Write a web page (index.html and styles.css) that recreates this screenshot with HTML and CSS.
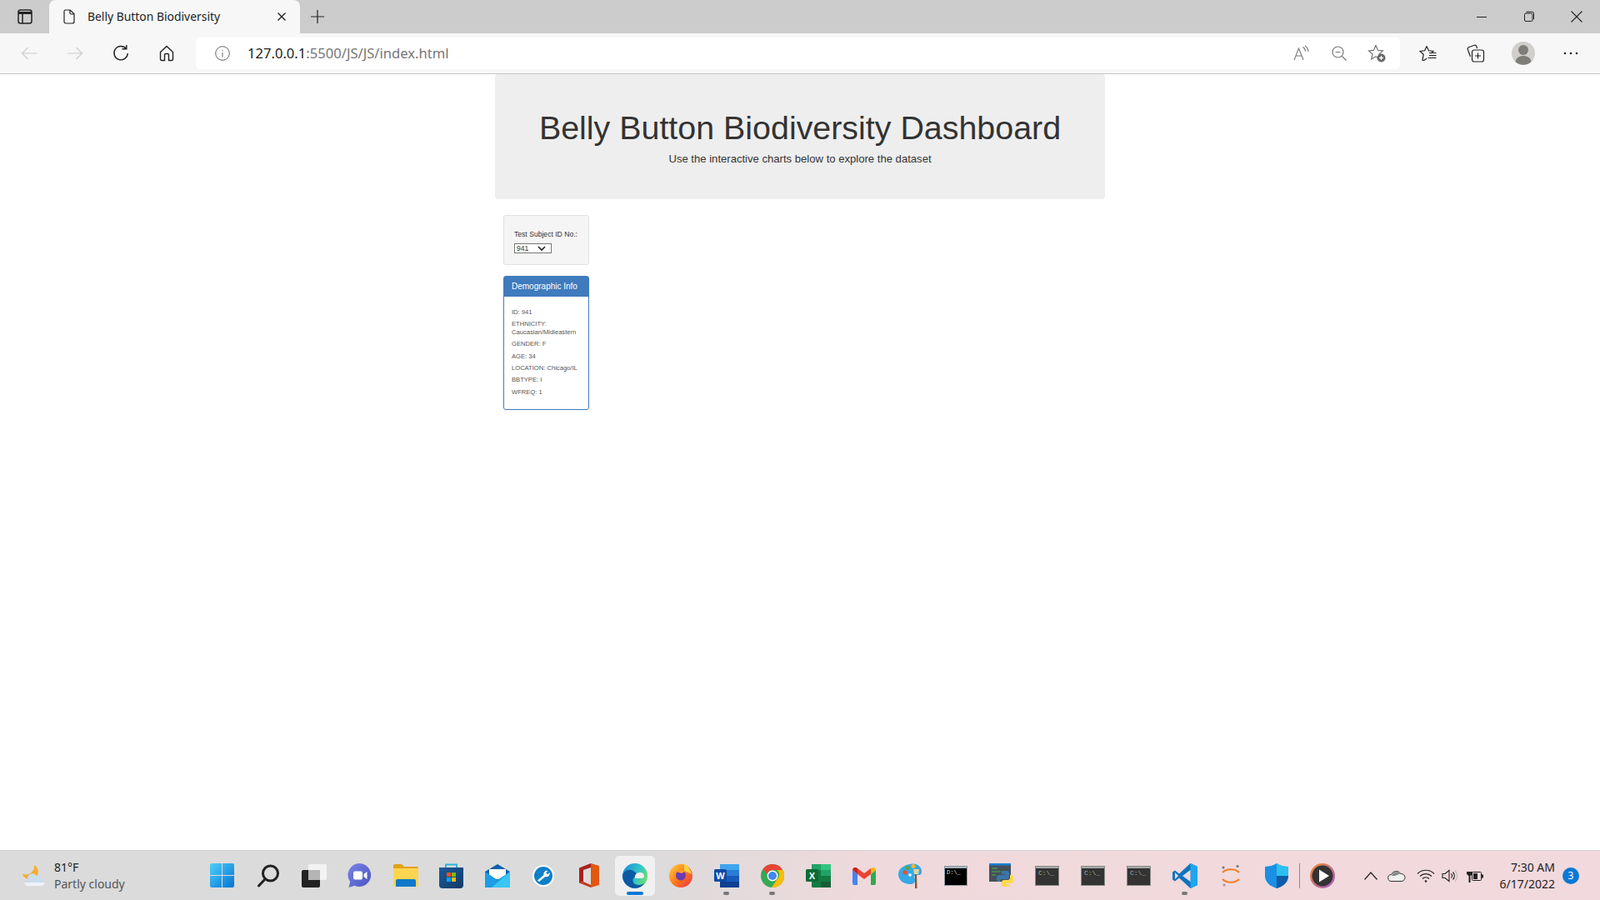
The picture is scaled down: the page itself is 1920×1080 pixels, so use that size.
FILE: index.html
```html
<!DOCTYPE html>
<html lang="en">
<head>
    <meta charset="UTF-8">
    <meta name="viewport" content="width=device-width, initial-scale=1.0">
    <title>Belly Button Biodiversity</title>
    <link rel="stylesheet" href="styles.css">
</head>
<body>
    <!-- browser tabs -->
    <div class="tabstrip">
        <div class="strip-btn">
            <svg width="18" height="18" viewBox="0 0 18 18" fill="none" stroke="#222" stroke-width="1.5"><rect x="1" y="1" width="16" height="16" rx="2.5"/><path d="M1 4.500h16" stroke-width="3"/><path d="M6 5v12"/></svg>
        </div>
        <div class="tab">
            <svg class="tab-icon" width="14" height="18" viewBox="0 0 14 18" fill="none" stroke="#222" stroke-width="1.2"><path d="M2.500 1h5.700L13 5.800V15a2 2 0 0 1-2 2H3a2 2 0 0 1-2-2V2.500A1.500 1.500 0 0 1 2.500 1zM8 1v3.500A1.500 1.500 0 0 0 9.500 6H13"/></svg>
            <span class="tab-title">Belly Button Biodiversity</span>
            <svg class="tab-close" width="12" height="12" viewBox="0 0 12 12" stroke="#222" stroke-width="1.4"><path d="M1.500 1.500l9 9M10.500 1.500l-9 9"/></svg>
        </div>
        <div class="new-tab">
            <svg width="16" height="16" viewBox="0 0 16 16" stroke="#222" stroke-width="1.2"><path d="M8 0v16M0 8h16"/></svg>
        </div>
        <div class="win-controls">
            <div class="win-btn"><svg width="14" height="14" viewBox="0 0 14 14" stroke="#222"><path d="M1 7.500h12"/></svg></div>
            <div class="win-btn"><svg width="14" height="14" viewBox="0 0 14 14" fill="none" stroke="#222"><rect x="1.500" y="3" width="9.500" height="9.500" rx="1.500"/><path d="M3.500 1.200h7a2 2 0 0 1 2 2v7"/></svg></div>
            <div class="win-btn"><svg width="14" height="14" viewBox="0 0 14 14" stroke="#222" stroke-width="1.100"><path d="M.5.500l13 13M13.500.500l-13 13"/></svg></div>
        </div>
    </div>

    <!-- address bar -->
    <div class="toolbar">
        <div class="nav-btn"><svg width="20" height="18" viewBox="0 0 20 18" fill="none" stroke="#ccc" stroke-width="1.200"><path d="M19 9H1.500M8.500 2L1.500 9l7 7"/></svg></div>
        <div class="nav-btn"><svg width="20" height="18" viewBox="0 0 20 18" fill="none" stroke="#ccc" stroke-width="1.200"><path d="M1 9h17.500M11.500 2l7 7-7 7"/></svg></div>
        <div class="nav-btn"><svg width="20" height="20" viewBox="0 0 20 20" fill="none" stroke="#222" stroke-width="1.400"><path d="M16.500 4.500A8.200 8.200 0 1 0 18.300 10"/><path d="M11.500 4.800h5.300V0"/></svg></div>
        <div class="nav-btn"><svg width="18" height="20" viewBox="0 0 18 20" fill="none" stroke="#222" stroke-width="1.400"><path d="M1.500 8.500L9 1.500l7.500 7V17a1.500 1.500 0 0 1-1.500 1.500h-3.500V12a1.500 1.500 0 0 0-1.500-1.500H8A1.500 1.500 0 0 0 6.500 12v6.500H3A1.500 1.500 0 0 1 1.500 17z"/></svg></div>
        <div class="urlbar">
            <svg class="url-info" width="18" height="18" viewBox="0 0 18 18" fill="none" stroke="#666"><circle cx="9" cy="9" r="8.300"/><path d="M9 8v5.500M9 5v1.300"/></svg>
            <span class="url-text"><span class="url-host">127.0.0.1</span>:5500/JS/JS/index.html</span>
            <div class="url-actions">
                <div class="url-btn"><svg width="20" height="20" viewBox="0 0 20 20" fill="none" stroke="#777" stroke-width="1.100"><path d="M1 18L6.500 4 12 18M3 13h7"/><path d="M11.500 2.500a6 6 0 0 1 3 5M14 1a9 9 0 0 1 4 7"/></svg></div>
                <div class="url-btn"><svg width="18" height="18" viewBox="0 0 18 18" fill="none" stroke="#777" stroke-width="1.200"><circle cx="7.500" cy="7.500" r="6.500"/><path d="M12.500 12.500l5 5M4.500 7.500h6"/></svg></div>
                <div class="url-btn"><svg width="22" height="22" viewBox="0 0 22 22" fill="none" stroke="#666" stroke-width="1.100"><path d="M10 1.500l2.500 5.800 6 .6-4.600 4 1.400 6-5.300-3.100-5.300 3.100 1.400-6-4.600-4 6-.6z"/><circle cx="16.500" cy="16.500" r="5" fill="#666" stroke="none"/><path d="M16.500 14v5M14 16.500h5" stroke="#fff" stroke-width="1.300"/></svg></div>
            </div>
        </div>
        <div class="tool-btn"><svg width="22" height="20" viewBox="0 0 22 20" fill="none" stroke="#222" stroke-width="1.200"><path d="M9 1.500l2.400 5.300 5.600.6-3 2.700M5.700 18.500l3.300-2.200M9 1.500L6.600 6.800 1 7.400l4.200 3.800-1.200 7 1.700.3"/><path d="M12 9.500h8.500M12 12.500h8.500M10.500 15.500h10"/></svg></div>
        <div class="tool-btn"><svg width="22" height="22" viewBox="0 0 22 22" fill="none" stroke="#222" stroke-width="1.200"><path d="M4.500 15L1.300 6.200a2 2 0 0 1 1.200-2.500l6.800-2.400a2 2 0 0 1 2.500 1.200L12.500 5"/><rect x="6.500" y="7" width="14" height="14" rx="2.500"/><path d="M13.500 10.500v7M10 14h7"/></svg></div>
        <div class="tool-btn"><svg width="28" height="28" viewBox="0 0 28 28"><circle cx="14" cy="14" r="14" fill="#d0cfcc"/><circle cx="14" cy="10" r="6" fill="#7f7d7a"/><path d="M4.500 24c1-5 5-7 9.500-7s8.500 2 9.500 7a14 14 0 0 1-19 0z" fill="#7f7d7a"/></svg></div>
        <div class="tool-btn"><svg width="18" height="4" viewBox="0 0 18 4" fill="#222"><circle cx="2" cy="2" r="1.300"/><circle cx="9" cy="2" r="1.300"/><circle cx="16" cy="2" r="1.300"/></svg></div>
    </div>

    <!-- page content -->
    <main class="page">
        <div class="container">
            <div class="jumbotron">
                <h1>Belly Button Biodiversity Dashboard</h1>
                <p>Use the interactive charts below to explore the dataset</p>
            </div>
            <div class="sidebar">
                <div class="well">
                    <label class="well-label" for="selDataset">Test Subject ID No.:</label>
                    <select class="sel-dataset" id="selDataset"><option>941</option></select>
                </div>
                <div class="panel">
                    <div class="panel-heading">Demographic Info</div>
                    <div class="panel-body">
                        <div class="meta-row">ID: 941</div>
                        <div class="meta-row">ETHNICITY: Caucasian/Midleastern</div>
                        <div class="meta-row">GENDER: F</div>
                        <div class="meta-row">AGE: 34</div>
                        <div class="meta-row">LOCATION: Chicago/IL</div>
                        <div class="meta-row">BBTYPE: I</div>
                        <div class="meta-row">WFREQ: 1</div>
                    </div>
                </div>
            </div>
        </div>
    </main>

    <!-- windows taskbar -->
    <footer class="taskbar">
        <div class="weather">
            <svg width="28" height="26" viewBox="0 0 28 26"><path d="M15 0A9.500 9.500 0 1 1 1 10.500 10 10 0 0 0 15 0z" fill="#f4ae2e"/><path d="M8 25a4.500 4.500 0 0 1-1-8.800A6 6 0 0 1 18 13a5 5 0 0 1 5 3 4.500 4.500 0 0 1 0 9z" fill="#c9dded"/><path d="M6 25h18a4 4 0 0 0 3.500-4H3.500A4.500 4.500 0 0 0 6 25z" fill="#edf3f8"/></svg>
            <div class="weather-text">
                <div class="weather-temp">81°F</div>
                <div class="weather-desc">Partly cloudy</div>
            </div>
        </div>
        <div class="tb-icons">
            <div class="tb-item"><svg width="29" height="29" viewBox="0 0 29 29"><defs><linearGradient id="win" x1="0" y1="0" x2="1" y2="1"><stop offset="0" stop-color="#4fd0fa"/><stop offset="1" stop-color="#0473d4"/></linearGradient></defs><path d="M2 0h12v14H0V2a2 2 0 0 1 2-2zM15 0h12a2 2 0 0 1 2 2v12H15zM0 15h14v14H2a2 2 0 0 1-2-2zM15 15h14v12a2 2 0 0 1-2 2H15z" fill="url(#win)"/></svg></div>
            <div class="tb-item"><svg width="28" height="28" viewBox="0 0 28 28" fill="none" stroke="#222" stroke-width="3" stroke-linecap="round"><circle cx="16.500" cy="11" r="9"/><path d="M10 18l-7.500 8"/></svg></div>
            <div class="tb-item"><svg width="30" height="28" viewBox="0 0 30 28"><rect x="8" y="0" width="22" height="19" rx="2" fill="#f3f3f3"/><rect x="0" y="7" width="22" height="21" rx="2" fill="#222"/><rect x="8" y="7" width="14" height="12" fill="#b5b5b5"/></svg></div>
            <div class="tb-item"><svg width="29" height="29" viewBox="0 0 29 29"><defs><linearGradient id="teams" x1="0" y1="0" x2="1" y2="1"><stop offset="0" stop-color="#7b83eb"/><stop offset="1" stop-color="#4b53bc"/></linearGradient></defs><path d="M14.500 0a14 14 0 1 1-6 26.800L1.500 29l1.600-7A14 14 0 0 1 14.500 0z" fill="url(#teams)"/><rect x="7" y="9.500" width="11" height="10" rx="2" fill="#fff"/><path d="M19.500 13l4-3v9l-4-3z" fill="#fff"/></svg></div>
            <div class="tb-item"><svg width="30" height="27" viewBox="0 0 30 27"><path d="M0 2a2 2 0 0 1 2-2h8l3 3h15a2 2 0 0 1 2 2v3H0z" fill="#e0a21a"/><path d="M0 5h30v20a2 2 0 0 1-2 2H2a2 2 0 0 1-2-2z" fill="#fdd54f"/><path d="M3 27v-7a2 2 0 0 1 2-2h20a2 2 0 0 1 2 2v7z" fill="#0f78c9"/></svg></div>
            <div class="tb-item"><svg width="29" height="30" viewBox="0 0 29 30"><defs><linearGradient id="store" x1="0" y1="0" x2="1" y2="1"><stop offset="0" stop-color="#1a5b9c"/><stop offset="1" stop-color="#123a66"/></linearGradient></defs><path d="M8 6V1.500h13V6" fill="none" stroke="#2cb5dc" stroke-width="2"/><path d="M0 5h29v21a4 4 0 0 1-4 4H4a4 4 0 0 1-4-4z" fill="url(#store)"/><rect x="9" y="11" width="5" height="5" fill="#f25022"/><rect x="15" y="11" width="5" height="5" fill="#7fba00"/><rect x="9" y="17" width="5" height="5" fill="#00a4ef"/><rect x="15" y="17" width="5" height="5" fill="#ffb900"/></svg></div>
            <div class="tb-item"><svg width="30" height="28" viewBox="0 0 30 28"><path d="M15 0l15 9v19H0V9z" fill="#0f62ad"/><path d="M5 6h20v12H5z" fill="#fff"/><path d="M0 9l15 10L30 9v19H0z" fill="#1d9de6"/><path d="M30 9v19H8z" fill="#39c6f4"/></svg></div>
            <div class="tb-item"><svg width="26" height="26" viewBox="0 0 26 26"><circle cx="13" cy="13" r="13" fill="#fff"/><circle cx="13" cy="13" r="11" fill="#0f7fc9"/><path d="M6 18.500l7.500-6.500a4 4 0 0 1 5-5l-2.300 2.500 2 1.800 2.300-2.300a4 4 0 0 1-5.200 5L8 20z" fill="#fff"/></svg></div>
            <div class="tb-item"><svg width="24" height="29" viewBox="0 0 24 29"><path d="M14 0L0 5.500v18L5 22V8l9-3z" fill="#a5231f"/><path d="M0 23.500L14 29v-3L5 22z" fill="#c23a1c"/><path d="M14 0l10 3v23l-10 3z" fill="#e3570f"/></svg></div>
            <div class="tb-item tb-active"><svg width="30" height="30" viewBox="0 0 30 30"><defs><linearGradient id="edge1" x1="0" y1=".2" x2="1" y2=".6"><stop offset="0" stop-color="#1b8fd8"/><stop offset=".6" stop-color="#33c4c8"/><stop offset="1" stop-color="#6be06a"/></linearGradient></defs><circle cx="15" cy="15" r="15" fill="url(#edge1)"/><path d="M0 15c1-6 8-9 13-6 4 2 5 6 4 8h-2c-3 0-4 5 0 8 4 2 9 1 12-2a15 15 0 0 1-12 7C7 30 0 23 0 15z" fill="#0c59a4"/><path d="M15 18c-1-4 2-7 6-7 3 0 5 2 5 4.500 0 1.500-1 2.500-3 2.500z" fill="#f0f0f0"/></svg></div>
            <div class="tb-item"><svg width="28" height="29" viewBox="0 0 28 29"><defs><linearGradient id="fox" x1="0" y1="0" x2="1" y2="1"><stop offset="0" stop-color="#ffd23f"/><stop offset=".5" stop-color="#ff7a1a"/><stop offset="1" stop-color="#e8304a"/></linearGradient></defs><circle cx="14" cy="15" r="14" fill="url(#fox)"/><path d="M18 0c5 4 8 8 9 13l-9-4z" fill="#ffd23f"/><circle cx="14" cy="14.500" r="6" fill="#6a3bb5"/><path d="M8 10c3-3 8-3 11 0l-4 2z" fill="#ff9a2e"/></svg></div>
            <div class="tb-item tb-running"><svg width="30" height="28" viewBox="0 0 30 28"><rect x="7" y="0" width="23" height="28" rx="1.500" fill="#185abd"/><rect x="7" y="0" width="23" height="7" fill="#41a5ee"/><rect x="7" y="7" width="23" height="7" fill="#2b7cd3"/><rect x="7" y="21" width="23" height="7" fill="#103f91"/><rect x="0" y="6" width="15" height="15" rx="1.500" fill="#0f4ba5"/><text x="7.500" y="18" class="word-w">W</text></svg></div>
            <div class="tb-item tb-running"><svg width="28" height="28" viewBox="0 0 28 28"><circle cx="14" cy="14" r="14" fill="#34a853"/><path d="M14 0a14 14 0 0 1 12.100 7H14a7 7 0 0 0-6.500 4.500L2.500 6A14 14 0 0 1 14 0z" fill="#ea4335"/><path d="M26.100 7A14 14 0 0 1 13 28l6.500-10a7 7 0 0 0 0-11z" fill="#fbbc05"/><circle cx="14" cy="14" r="6.500" fill="#fff"/><circle cx="14" cy="14" r="5" fill="#4285f4"/></svg></div>
            <div class="tb-item"><svg width="30" height="28" viewBox="0 0 30 28"><rect x="7" y="0" width="23" height="28" rx="1.500" fill="#107c41"/><rect x="18" y="0" width="12" height="7" fill="#33c481"/><rect x="7" y="0" width="11" height="7" fill="#21a366"/><rect x="18" y="7" width="12" height="7" fill="#21a366"/><rect x="18" y="21" width="12" height="7" fill="#185c37"/><rect x="0" y="6" width="15" height="15" rx="1.500" fill="#0e6a37"/><text x="7.500" y="18" class="word-w">X</text></svg></div>
            <div class="tb-item"><svg width="28" height="22" viewBox="0 0 28 22"><path d="M0 4v16a2 2 0 0 0 2 2h4V9z" fill="#4285f4"/><path d="M22 9v13h4a2 2 0 0 0 2-2V4z" fill="#34a853"/><path d="M6 9l8 6 8-6V2l-8 6-8-6z" fill="#ea4335"/><path d="M0 4a3.500 3.500 0 0 1 6-2v7z" fill="#c5221f"/><path d="M22 2a3.500 3.500 0 0 1 6 2l-6 5z" fill="#fbbc04"/></svg></div>
            <div class="tb-item"><svg width="28" height="30" viewBox="0 0 28 30"><path d="M14 1c8-2 14 3 14 9 0 5-4 4-6 4-3 0-3 3-2 5 1 3-1 6-6 6C6 25 0 20 0 13 0 7 6 2 14 1z" fill="#35a8e8"/><circle cx="8" cy="11" r="2.700" fill="#e0533c"/><circle cx="11" cy="5.500" r="2.500" fill="#58a83c"/><circle cx="18" cy="3.500" r="2.500" fill="#f2b632"/><circle cx="14" cy="14" r="1.800" fill="#fff"/><path d="M20 12h2l.5 18h-2.500z" fill="#8a5a2b"/><path d="M18 7h7l-1 6h-5z" fill="#e9cf9a"/></svg></div>
            <div class="tb-item"><svg class="console" width="28" height="24" viewBox="0 0 28 24"><rect x=".5" y=".5" width="27" height="23" fill="#000" stroke="#8b9aa3"/><rect x="1" y="1" width="26" height="2" fill="#aab4bb"/><text x="3" y="10" class="cmd-text">D:\_</text></svg></div>
            <div class="tb-item"><svg width="29" height="29" viewBox="0 0 29 29"><rect x="0" y="0" width="26" height="22" fill="#45505a"/><rect x="0" y="0" width="26" height="2.500" fill="#1a7fd4"/><path d="M3 6h7M3 10h11M3 14h5" stroke="#4caf50" stroke-width="1.200"/><path d="M15 9h6a3 3 0 0 1 3 3v4a3 3 0 0 1-3 3h-6a2 2 0 0 0-2 2v1h-1a3 3 0 0 1-3-3v-2a3 3 0 0 1 3-3h7v-1h-4z" fill="#3a76a8"/><path d="M25 14v3a3 3 0 0 1-3 3h-4a3 3 0 0 0-3 3v2a3 3 0 0 0 3 3h4a3 3 0 0 0 3-3h-5v-1h6a3 3 0 0 0 3-3v-4a3 3 0 0 0-3-3z" fill="#ffd94c"/></svg></div>
            <div class="tb-item"><svg width="29" height="24" viewBox="0 0 29 24"><rect x=".5" y=".5" width="28" height="23" fill="#333" stroke="#8b8b8b"/><rect x="1" y="1" width="27" height="2" fill="#a9a9a9"/><text x="4" y="11" class="c-text">C:\_</text></svg></div>
            <div class="tb-item"><svg width="29" height="24" viewBox="0 0 29 24"><rect x=".5" y=".5" width="28" height="23" fill="#333" stroke="#8b8b8b"/><rect x="1" y="1" width="27" height="2" fill="#a9a9a9"/><text x="4" y="11" class="c-text">C:\_</text></svg></div>
            <div class="tb-item"><svg width="29" height="24" viewBox="0 0 29 24"><rect x=".5" y=".5" width="28" height="23" fill="#333" stroke="#8b8b8b"/><rect x="1" y="1" width="27" height="2" fill="#a9a9a9"/><text x="4" y="11" class="c-text">C:\_</text></svg></div>
            <div class="tb-item tb-running"><svg width="30" height="30" viewBox="0 0 30 30"><path d="M21.500 0L30 4v22l-8.500 4L8 17.500l-5 4L0 19.500v-9l3-2 5 4z" fill="#0f74bd"/><path d="M21.500 0L30 4v22l-8.500 4z" fill="#1ea5ee"/><path d="M21.500 8v14L12 15z" fill="#f2d9dd"/><path d="M3 11v8l4-4z" fill="#f2d9dd"/></svg></div>
            <div class="tb-item"><svg width="24" height="30" viewBox="0 0 24 30" fill="none"><path d="M2 11c5-5 15-5 20 0" stroke="#f0812b" stroke-width="2.200"/><path d="M2 19c5 5 15 5 20 0" stroke="#f0812b" stroke-width="2.200"/><circle cx="3" cy="5" r="1.600" fill="#777"/><circle cx="20" cy="3.500" r="1.600" fill="#777"/><circle cx="4" cy="26" r="1.600" fill="#999"/></svg></div>
            <div class="tb-item"><svg width="28" height="30" viewBox="0 0 28 30"><path d="M14 0c4 2.500 8 4 14 4v11c0 8-7 13-14 15C7 28 0 23 0 15V4c6 0 10-1.500 14-4z" fill="#1a8fe3"/><path d="M14 0c4 2.500 8 4 14 4v11H14z" fill="#2ac0f0"/><path d="M14 15h14c0 8-7 13-14 15z" fill="#0f5ca8"/></svg></div>
            <div class="tb-item tb-sep"><svg width="30" height="30" viewBox="0 0 30 30"><defs><linearGradient id="ring" x1="0" y1="0" x2="1" y2="1"><stop offset="0" stop-color="#f58a2a"/><stop offset="1" stop-color="#9a5bc9"/></linearGradient></defs><circle cx="15" cy="15" r="15" fill="url(#ring)"/><circle cx="15" cy="15" r="12.500" fill="#333"/><path d="M11 7.500l12 7.500-12 7.500z" fill="#fff"/></svg></div>
        </div>
        <div class="tray">
            <div class="tray-item"><svg width="16" height="10" viewBox="0 0 16 10" fill="none" stroke="#222" stroke-width="1.200"><path d="M.5 9.500L8 1l7.500 8.500"/></svg></div>
            <div class="tray-item"><svg width="22" height="14" viewBox="0 0 22 14"><path d="M5 13.500a4 4 0 0 1-.5-8A6.500 6.500 0 0 1 16 4.500a4.500 4.500 0 0 1 1 9z" fill="#eee" stroke="#333"/><path d="M5 7a6.500 6.500 0 0 1 11-2.500c-3 0-5 3-11 2.500z" fill="#888"/></svg></div>
            <div class="tray-item tray-wifi"><svg width="22" height="16" viewBox="0 0 22 16" fill="none" stroke="#222" stroke-width="1.100"><path d="M1 5.500a14 14 0 0 1 20 0M4 8.500a10 10 0 0 1 14 0M7 11.500a5.500 5.500 0 0 1 8 0"/><circle cx="11" cy="14.500" r="1.300" fill="#222" stroke="none"/></svg></div>
            <div class="tray-item tray-speaker"><svg width="20" height="16" viewBox="0 0 20 16" fill="none" stroke="#222" stroke-width="1.100"><path d="M1 5.500h3L9 1.500v13l-5-4H1z"/><path d="M11.500 5.500a3.500 3.500 0 0 1 0 5M13.500 3.500a6.500 6.500 0 0 1 0 9"/><path d="M16 1.500a9.500 9.500 0 0 1 0 13" stroke="#bbb"/></svg></div>
            <div class="tray-item"><svg width="20" height="16" viewBox="0 0 20 16"><rect x="6.500" y="3.500" width="11" height="10" rx="1" fill="none" stroke="#222"/><path d="M18 6.500h2v4h-2zM8 5h5v7H8zM2 0v3M5 0v3M0 3h7v3L4.500 8v8h-2V8L0 6z" fill="#222"/></svg></div>
            <div class="clock">
                <div>7:30 AM</div>
                <div>6/17/2022</div>
            </div>
            <div class="notif-badge">3</div>
        </div>
    </footer>
</body>
</html>
```
FILE: styles.css
```css
* {
    box-sizing: border-box;
}

html, body {
    margin: 0;
    height: 100%;
}

body {
    display: flex;
    flex-direction: column;
    overflow: hidden;
    background: #fff;
    font-family: "Noto Sans", sans-serif;
}

/* browser tabs */
.tabstrip {
    display: flex;
    align-items: stretch;
    height: 40px;
    background: #cccccc;
}

.strip-btn {
    display: flex;
    align-items: center;
    justify-content: center;
    flex: none;
    width: 59px;
}

.tab {
    display: flex;
    align-items: center;
    flex: none;
    width: 301px;
    padding-left: 17px;
    background: #f7f7f7;
    border-radius: 8px 8px 0 0;
}

.tab-title {
    flex: 1;
    margin-left: 15px;
    padding-bottom: 2px;
    font-size: 13.9px;
    color: #222;
}

.tab-close {
    margin-right: 16px;
}

.new-tab {
    display: flex;
    align-items: center;
    width: 36px;
    padding-left: 13px;
}

.win-controls {
    display: flex;
    margin-left: auto;
}

.win-btn {
    display: flex;
    align-items: center;
    justify-content: center;
    width: 57px;
}

/* address bar */
.toolbar {
    display: flex;
    align-items: center;
    height: 49px;
    padding: 0 7px 1px 7px;
    background: #f7f7f7;
    border-bottom: 1px solid #c4c4c4;
}

.nav-btn {
    display: flex;
    align-items: center;
    justify-content: center;
    flex: none;
    width: 55px;
}

.urlbar {
    display: flex;
    align-items: center;
    flex: 1;
    height: 38px;
    margin: 0 5px 0 8px;
    padding-left: 23px;
    background: #fff;
    border-radius: 5px;
}

.url-text {
    margin-left: 21px;
    font-size: 16.6px;
    color: #767676;
}

.url-host {
    color: #222;
}

.url-actions {
    display: flex;
    margin-left: auto;
    margin-right: 6px;
}

.url-btn {
    display: flex;
    align-items: center;
    justify-content: center;
    width: 45px;
}

.tool-btn {
    display: flex;
    align-items: center;
    justify-content: center;
    flex: none;
    width: 57px;
}

/* page content */
.page {
    flex: 1;
    min-height: 0;
}

.container {
    width: 732px;
    margin: 0 auto;
    font-family: "Liberation Sans", Arial, sans-serif;
    color: #333;
}

.jumbotron {
    height: 150px;
    padding-top: 41px;
    text-align: center;
    background: #eeeeee;
    border-radius: 4px;
}

.jumbotron h1 {
    margin: 0;
    font-size: 39.4px;
    font-weight: 400;
    line-height: 46px;
}

.jumbotron p {
    margin: 6.500px 0 0;
    font-size: 13.1px;
    line-height: 15px;
}

.sidebar {
    width: 103px;
    margin: 19px 0 0 10px;
}

.well {
    height: 60px;
    padding: 17px 12px 0;
    background: #f5f5f5;
    border: 1px solid #e3e3e3;
    border-radius: 3px;
}

.well-label {
    display: block;
    font-size: 8.6px;
    line-height: 10px;
    white-space: nowrap;
}

.sel-dataset {
    display: block;
    width: 45px;
    height: 12px;
    margin-top: 6px;
    padding: 0 0 0 2px;
    font-family: inherit;
    font-size: 8.6px;
    line-height: 10px;
    color: #333;
    background: #fff url("data:image/svg+xml,%3Csvg xmlns='http://www.w3.org/2000/svg' width='12' height='8'%3E%3Cpath d='M2 2l4 4 4-4' fill='none' stroke='%23222' stroke-width='1.600'/%3E%3C/svg%3E") no-repeat right 5px center;
    border: 1px solid #767676;
    border-radius: 0;
    appearance: none;
}

.panel {
    height: 161px;
    margin-top: 13px;
    background: #fff;
    border: 1px solid #3f7bbd;
    border-radius: 3px;
}

.panel-heading {
    height: 24px;
    padding-left: 9px;
    font-size: 10px;
    line-height: 23px;
    white-space: nowrap;
    color: #fff;
    background: #3f7bbd;
}

.panel-body {
    padding: 14px 9px 0;
    font-size: 7.6px;
    line-height: 9.500px;
    color: #555;
}

.meta-row {
    margin-bottom: 4.900px;
}

/* windows taskbar */
.taskbar {
    display: flex;
    align-items: center;
    flex: none;
    height: 60px;
    background: linear-gradient(90deg, #dbdbdb 0, #dbdbdb 40%, #f0d9dc 55%, #f2d9dd 100%);
    border-top: 1px solid #d2d2d2;
}

.weather {
    display: flex;
    align-items: center;
    flex: none;
    width: 239px;
    padding-left: 26px;
}

.weather-text {
    margin-left: 11px;
    font-size: 14px;
    line-height: 20px;
}

.weather-temp {
    color: #222;
}

.weather-desc {
    color: #555;
}

.tb-icons {
    display: flex;
    align-items: center;
}

.tb-item {
    position: relative;
    display: flex;
    align-items: center;
    justify-content: center;
    width: 55px;
    height: 48px;
}

.tb-active {
    background: #f0f0f0;
    border-radius: 5px;
    width: 48px;
    margin: 0 3.500px;
}

.tb-active::after,
.tb-running::after {
    content: "";
    position: absolute;
    bottom: 1px;
    left: 50%;
    width: 7px;
    height: 4px;
    margin-left: -3.500px;
    background: #777;
    border-radius: 2px;
}

.tb-active::after {
    width: 20px;
    margin-left: -10px;
    background: #0a78d4;
}

.tb-sep::before {
    content: "";
    position: absolute;
    top: 9px;
    left: 0;
    width: 1px;
    height: 30px;
    background: #8c8c8c;
}

.word-w {
    font-family: "Liberation Sans", sans-serif;
    font-size: 11px;
    font-weight: 700;
    text-anchor: middle;
    fill: #fff;
}

.cmd-text {
    font-family: "Liberation Mono", monospace;
    font-size: 7px;
    fill: #ddd;
}

.c-text {
    font-family: "Liberation Mono", monospace;
    font-size: 8px;
    fill: #aaa;
}

.tray {
    display: flex;
    align-items: center;
    flex: none;
    margin-left: auto;
}

.tray-item {
    display: flex;
    align-items: center;
    justify-content: center;
    width: 31px;
}

.tray-wifi {
    margin: 0 -1.500px 0 3.500px;
}

.tray-speaker {
    margin-right: -1px;
}

.clock {
    margin-left: 14px;
    font-size: 14px;
    line-height: 20px;
    text-align: right;
    color: #222;
}

.notif-badge {
    width: 20px;
    height: 20px;
    margin: 0 25px 0 9px;
    font-size: 12px;
    line-height: 20px;
    text-align: center;
    color: #fff;
    background: #0a78d4;
    border-radius: 50%;
}
```
